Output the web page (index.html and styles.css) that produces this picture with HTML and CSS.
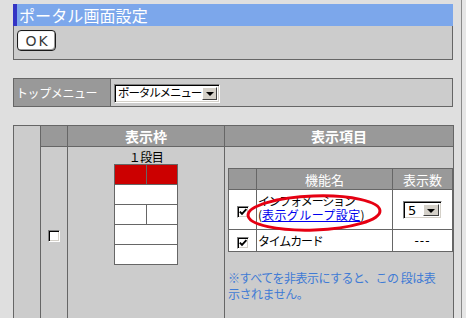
FILE: index.html
```html
<!DOCTYPE html>
<html lang="ja">
<head>
<meta charset="utf-8">
<title>ポータル画面設定</title>
<link rel="stylesheet" href="styles.css">
</head>
<body>
<div class="page">
  <div class="title">ポータル画面設定</div>
  <div class="okbar"><span class="btn">OK</span></div>

  <table class="menu">
    <tr>
      <th class="menu-label">トップメニュー</th>
      <td class="menu-value">
        <span class="sel sel-menu"><span class="sel-text">ポータルメニュー</span><span class="sel-btn"><span class="tri"></span></span></span>
      </td>
    </tr>
  </table>

  <table class="main">
    <colgroup><col class="c1"><col class="c2"><col class="c3"><col class="c4"></colgroup>
    <tr class="hrow">
      <td class="blank" rowspan="2"></td>
      <th></th>
      <th>表示枠</th>
      <th>表示項目</th>
    </tr>
    <tr class="brow">
      <td class="chk-cell"><span class="cb"></span></td>
      <td class="frame-cell">
        <div class="frame-title">１段目</div>
        <table class="diagram">
          <tr><td class="red"></td><td class="red"></td></tr>
          <tr><td colspan="2"></td></tr>
          <tr><td></td><td></td></tr>
          <tr><td colspan="2"></td></tr>
          <tr><td colspan="2"></td></tr>
        </table>
      </td>
      <td class="items-cell">
        <table class="items">
          <colgroup><col class="i1"><col class="i2"><col class="i3"></colgroup>
          <tr class="ihead"><th></th><th>機能名</th><th>表示数</th></tr>
          <tr class="irow1">
            <td class="ic"><span class="cb checked"><svg viewBox="0 0 10 10" width="10" height="10"><path d="M1.8 4.6 L4 6.9 L8.4 2.2" fill="none" stroke="#000" stroke-width="1.9"/></svg></span></td>
            <td class="iname iname-two">
              <div class="iline kata">インフォメーション</div>
              <div class="iline">(<a class="link" href="#">表示グループ設定</a>)</div>
              <svg class="ellipse" width="150" height="48" viewBox="0 0 150 48"><ellipse cx="73" cy="24" rx="66" ry="17" fill="none" stroke="#e60012" stroke-width="3" transform="rotate(-2 73 24)"/></svg>
            </td>
            <td class="inum"><span class="sel sel-num"><span class="sel-text">5</span><span class="sel-btn"><span class="tri"></span></span></span></td>
          </tr>
          <tr class="irow2">
            <td class="ic"><span class="cb checked"><svg viewBox="0 0 10 10" width="10" height="10"><path d="M1.8 4.6 L4 6.9 L8.4 2.2" fill="none" stroke="#000" stroke-width="1.9"/></svg></span></td>
            <td class="iname"><span class="kata">タイムカード</span></td>
            <td class="inum dash">---</td>
          </tr>
        </table>
        <p class="note">※すべてを非表示にすると、この 段は表<br>示されません。</p>
      </td>
    </tr>
  </table>
</div>
</body>
</html>
```

FILE: styles.css
```css
* { box-sizing: border-box; }
html, body { margin: 0; height: 100%; }
body {
  background: #e6e6e6;
  font-family: "Noto Sans CJK JP", "Noto Sans", sans-serif;
  font-size: 12px;
  color: #000;
  overflow: hidden;
}
.page {
  width: 462px;
  height: 100%;
  border-right: 1px solid #8a8a8a;
  padding: 4px 0 0 13px;
  background: #dfdfdf;
}
.title {
  width: 440px;
  height: 22px;
  background: #7ca7eb;
  border-left: 4px solid #3434c4;
  padding-left: 2px;
  color: #fff;
  font-size: 16px;
  line-height: 22px;
  letter-spacing: 0.1px;
}
.okbar {
  width: 440px;
  height: 34px;
  background: #cccccc;
  border: 1px solid #666;
  border-top: 0;
  padding: 4px 0 0 3px;
}
.btn {
  display: flex;
  align-items: center;
  justify-content: center;
  width: 39px;
  height: 21px;
  background: #fff;
  border: 1px solid #1a1a1a;
  border-radius: 4px;
  box-shadow: inset -1px -1px 0 #9a9a9a, inset 1px 1px 0 #f4f4f4;
  font-family: "DejaVu Sans", sans-serif;
  font-size: 14px;
  letter-spacing: 2px;
  padding-left: 2px;
  color: #3a3a3a;
  line-height: 1;
}

/* top menu */
.menu {
  margin-top: 18px;
  width: 440px;
  border-collapse: collapse;
}
.menu th, .menu td {
  border: 1px solid #666;
  padding: 0;
  height: 28px;
}
.menu-label {
  width: 97px;
  background: #999;
  color: #fff;
  font-weight: normal;
  text-align: left;
  padding-left: 2px !important;
  font-size: 12px;
  letter-spacing: -0.4px;
}
.menu-value {
  background: #ccc;
  padding-left: 3px !important;
  vertical-align: middle;
}

/* select imitation */
.sel {
  display: inline-flex;
  align-items: stretch;
  background: #fff;
  border: 1px solid;
  border-color: #808080 #fff #fff #808080;
  box-shadow: inset 1px 1px 0 #000, inset -1px -1px 0 #d4d0c8;
  padding: 2px;
  vertical-align: middle;
}
.sel-text {
  flex: 1;
  min-width: 0;
  display: flex;
  align-items: center;
  padding-left: 1px;
  font-size: 12px;
  line-height: 1;
  white-space: nowrap;
  overflow: hidden;
}
.sel-btn {
  flex: 0 0 15px;
  width: 15px;
  background: #d4d0c8;
  border: 1px solid;
  border-color: #fff #404040 #404040 #fff;
  display: flex;
  align-items: center;
  justify-content: center;
}
.tri {
  width: 0;
  height: 0;
  border-left: 4px solid transparent;
  border-right: 4px solid transparent;
  border-top: 4px solid #000;
  margin-top: 1px;
}
.sel-menu { width: 106px; height: 19px; }
.sel-menu .sel-text { font-size: 11.5px; letter-spacing: -1.1px; overflow: visible; }
.sel-num { width: 39px; height: 18px; }
.sel-num .sel-btn { flex-basis: 16px; width: 16px; }
.sel-num .sel-text { font-family: "DejaVu Sans", sans-serif; font-size: 13px; padding-left: 2px; }

/* main table */
.main {
  margin-top: 18px;
  width: 440px;
  border-collapse: collapse;
  table-layout: fixed;
}
.c1 { width: 27px; }
.c2 { width: 27px; }
.c3 { width: 157px; }
.c4 { width: 229px; }
.main > tbody > tr > th,
.main > tbody > tr > td {
  border: 1px solid #666;
  padding: 0;
}
.hrow { height: 21px; }
.hrow th {
  background: #999;
  color: #fff;
  font-size: 14px;
  font-weight: bold;
  text-align: center;
  line-height: 19px;
}
.main td.blank { background: #cccccc; }
.brow { height: 175px; }
.brow > td { background: #cccccc; }
.chk-cell { text-align: center; vertical-align: middle; }
.frame-cell {
  vertical-align: top;
  padding-top: 3px !important;
  text-align: center;
}
.frame-title {
  font-size: 12px;
  line-height: 14px;
  letter-spacing: -0.5px;
}
.diagram {
  margin: 0 auto;
  width: 64px;
  border-collapse: collapse;
  table-layout: fixed;
}
.diagram td {
  border: 1px solid #666;
  height: 20px;
  padding: 0;
  background: #fff;
}
.diagram td.red { background: #cc0000; }

.items-cell {
  vertical-align: top;
  padding: 21px 0 0 3px !important;
}
.items {
  width: 224px;
  border-collapse: collapse;
  table-layout: fixed;
  background: #fff;
}
.i1 { width: 28px; }
.i2 { width: 136px; }
.i3 { width: 60px; }
.items th, .items td {
  border: 1px solid #666;
  padding: 0;
}
.ihead { height: 21px; }
.ihead th {
  background: #999;
  color: #fff;
  font-weight: normal;
  font-size: 13px;
  line-height: 19px;
}
.irow1 { height: 40px; }
.irow2 { height: 22px; }
.ic { text-align: center; vertical-align: middle; }
.iname {
  position: relative;
  padding-left: 1px !important;
  vertical-align: middle;
  font-size: 12px;
}
.iname-two { padding-bottom: 3px !important; }
.iline { line-height: 14px; white-space: nowrap; }
.kata { letter-spacing: -1.2px; }
.link { color: #0000ee; text-decoration: underline; letter-spacing: 0.4px; }
.ellipse {
  position: absolute;
  left: -16px;
  top: -1px;
  overflow: visible;
  pointer-events: none;
}
.inum { text-align: center; vertical-align: middle; }
.dash { font-family: "DejaVu Sans", sans-serif; font-size: 12px; letter-spacing: 1px; }

/* checkbox imitation */
.cb {
  display: inline-flex;
  align-items: center;
  justify-content: center;
  width: 12px;
  height: 12px;
  background: #fff;
  border: 1px solid;
  border-color: #808080 #fff #fff #808080;
  box-shadow: inset 1px 1px 0 #000, inset -1px -1px 0 #d4d0c8;
  vertical-align: middle;
}
.cb svg { display: block; }

.note {
  margin: 18px 0 0;
  color: #3f7bd5;
  font-size: 12px;
  line-height: 16px;
  letter-spacing: -0.5px;
  white-space: nowrap;
}
```
